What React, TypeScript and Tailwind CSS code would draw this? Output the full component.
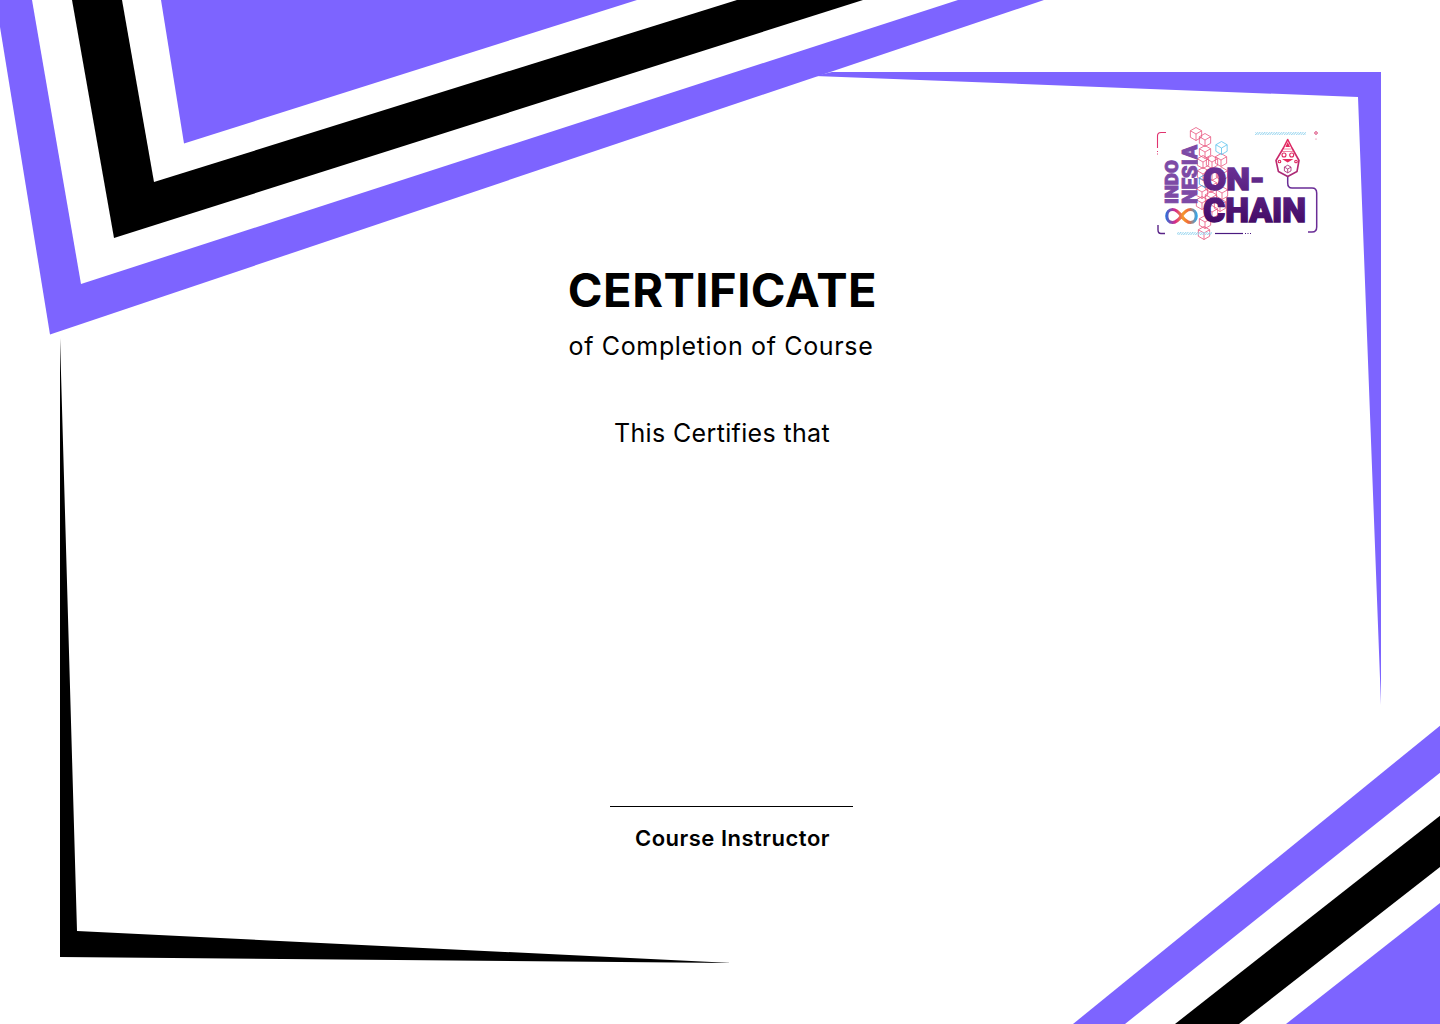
import React from 'react';

const PURPLE = '#7d64ff';

// flat-top wireframe cube used all over the logo
const Cube = ({ x, y, r = 6.5, color = '#e8557f' }: { x: number; y: number; r?: number; color?: string }) => {
  const w = r * 0.87;
  const h = r / 2;
  return (
    <g fill="none" stroke={color} strokeWidth="0.8">
      <path d={`M${x} ${y - r}L${x + w} ${y - h}V${y + h}L${x} ${y + r}L${x - w} ${y + h}V${y - h}Z`} />
      <path d={`M${x - w} ${y - h}L${x} ${y}L${x + w} ${y - h}M${x} ${y}V${y + r}`} />
    </g>
  );
};

const cubes = [
  [1196, 134], [1205, 140], [1205, 152], [1203, 162], [1212, 162], [1221, 160],
  [1212, 174], [1203, 174], [1222, 174], [1202, 192], [1222, 193], [1211, 186],
  [1202, 203], [1220, 205], [1211, 198], [1205, 222], [1204, 233], [1212, 212],
];

const Logo = () => (
  <svg width="175" height="115" viewBox="1150 125 175 115" className="block">
    <defs>
      <linearGradient id="wordFill" gradientUnits="userSpaceOnUse" x1="0" y1="165" x2="0" y2="224">
        <stop offset="0" stopColor="#6b3296" />
        <stop offset="1" stopColor="#430a66" />
      </linearGradient>
      <linearGradient id="sideFill" gradientUnits="userSpaceOnUse" x1="0" y1="145" x2="0" y2="205">
        <stop offset="0" stopColor="#7d4aa6" />
        <stop offset="1" stopColor="#4f1a78" />
      </linearGradient>
      <linearGradient id="loopFill" gradientUnits="userSpaceOnUse" x1="1166" y1="216" x2="1197" y2="216">
        <stop offset="0" stopColor="#2f6fd8" />
        <stop offset="0.3" stopColor="#d8288a" />
        <stop offset="0.55" stopColor="#f59a2a" />
        <stop offset="0.72" stopColor="#f06a3a" />
        <stop offset="1" stopColor="#2fa8ee" />
      </linearGradient>
      <linearGradient id="puppetFill" gradientUnits="userSpaceOnUse" x1="0" y1="139" x2="0" y2="180">
        <stop offset="0" stopColor="#e8285f" />
        <stop offset="1" stopColor="#a02a7a" />
      </linearGradient>
      <pattern id="hatch" width="2.4" height="3" patternUnits="userSpaceOnUse" patternTransform="skewX(-40)">
        <rect width="1.2" height="3" fill="#9fd8f0" />
      </pattern>
    </defs>

    {cubes.map(([x, y]) => (
      <Cube key={`${x}-${y}`} x={x} y={y} />
    ))}
    <Cube x={1221.5} y={148} color="#5cc3ee" />
    <Cube x={1205} y={181} color="#3ba5dc" />

    {/* brackets and rules */}
    <path d="M1166 132.5H1161Q1157.5 132.5 1157.5 136V148" fill="none" stroke="#e0336f" strokeWidth="1.1" />
    <path d="M1157.5 151V155" fill="none" stroke="#e0336f" strokeWidth="1" strokeDasharray="1 1.5" />
    <path d="M1158 225V230Q1158 233.5 1161 233.5H1165" fill="none" stroke="#5a2488" strokeWidth="1.4" />
    <path
      d="M1287.7 176V183Q1287.7 188 1292 188H1312Q1316.7 188 1316.7 193V227Q1316.7 232 1312 232H1308"
      fill="none"
      stroke="#6a2d96"
      strokeWidth="1.5"
    />
    <rect x="1255" y="132" width="51" height="3" fill="url(#hatch)" />
    <rect x="1177" y="232" width="35" height="3" fill="url(#hatch)" />
    <path d="M1215 233.5H1243" stroke="#4a1a80" strokeWidth="1.2" />
    <path d="M1245 233.5H1252" stroke="#4a1a80" strokeWidth="1.2" strokeDasharray="1 1.5" />
    <circle cx="1316" cy="133" r="1.3" fill="none" stroke="#d6336c" strokeWidth="0.9" />
    <circle cx="1316" cy="139" r="0.5" fill="#d6336c" />

    {/* puppet */}
    <path
      d="M1287.7 139.5L1292 148L1299 160.5L1297 171.5L1287.7 176.5L1278.4 171.5L1276 160.5L1283.4 148Z"
      fill="#fff"
      stroke="url(#puppetFill)"
      strokeWidth="1.6"
      strokeLinejoin="round"
    />
    <path d="M1287.7 142L1290 147H1285.4Z" fill="#e8285f" />
    <path d="M1284 149H1291.4M1282 151.5H1293.4" stroke="#ef6a8e" strokeWidth="0.8" />
    <g fill="none" stroke="#e0285f" strokeWidth="1.1">
      <circle cx="1284" cy="155" r="2" />
      <circle cx="1291.7" cy="155" r="2" />
      <circle cx="1279.5" cy="161.5" r="1.3" />
      <circle cx="1296" cy="161.5" r="1.3" />
    </g>
    <path d="M1282 159H1293.5L1287.7 162.5Z" fill="#e8285f" />
    <Cube x={1287.7} y={169} r={3.8} color="#a4206e" />

    {/* wordmark */}
    <g fontFamily="Roboto, 'Liberation Sans', sans-serif" fontWeight="900" stroke="url(#wordFill)" strokeWidth="1.4">
      <text x="1203" y="190" fontSize="32" fill="url(#wordFill)" textLength="62" lengthAdjust="spacingAndGlyphs">
        ON-
      </text>
      <text x="1203" y="222" fontSize="33" fill="url(#wordFill)" textLength="103" lengthAdjust="spacingAndGlyphs">
        CHAIN
      </text>
    </g>
    <g
      fontFamily="Roboto, 'Liberation Sans', sans-serif"
      fontWeight="900"
      fill="url(#sideFill)"
      stroke="url(#sideFill)"
      strokeWidth="0.9"
    >
      <text transform="translate(1178 204) rotate(-90)" fontSize="18" textLength="44" lengthAdjust="spacingAndGlyphs">
        INDO
      </text>
      <text transform="translate(1197 204) rotate(-90)" fontSize="20" textLength="59" lengthAdjust="spacingAndGlyphs">
        NESIA
      </text>
    </g>

    {/* infinity */}
    <path
      d="M1181.5 216C1178 211 1175.5 209.5 1172.5 209.5C1169 209.5 1166.8 212.5 1166.8 216C1166.8 219.5 1169 222.5 1172.5 222.5C1175.5 222.5 1178 221 1181.5 216C1185 211 1187.5 209.5 1190.5 209.5C1194 209.5 1196.2 212.5 1196.2 216C1196.2 219.5 1194 222.5 1190.5 222.5C1187.5 222.5 1185 221 1181.5 216Z"
      fill="none"
      stroke="url(#loopFill)"
      strokeWidth="3.2"
    />
  </svg>
);

const Decor = () => (
  <svg width="1440" height="1024" viewBox="0 0 1440 1024" className="absolute inset-0">
    {/* top left stripes */}
    <polygon points="0,0 1044,0 50,334.5 0,27" fill={PURPLE} />
    <polygon points="32,0 958,0 81,284" fill="#fff" />
    <polygon points="72,0 863,0 114,238" fill="#000" />
    <polygon points="122,0 737,0 154,182" fill="#fff" />
    <polygon points="161,0 637,0 184,143.5" fill={PURPLE} />
    {/* frame */}
    <polygon points="832,72 1381,72 1381,705 1358,97 815,76" fill={PURPLE} />
    <polygon points="60,338 77,931 732,963 60,957" fill="#000" />
    {/* bottom right stripes */}
    <polygon points="1440,725.7 1440,772.7 1125,1024 1073,1024" fill={PURPLE} />
    <polygon points="1440,815.7 1440,867 1239,1024 1175,1024" fill="#000" />
    <polygon points="1440,903 1440,1024 1286,1024" fill={PURPLE} />
  </svg>
);

export default function App() {
  return (
    <div className="relative h-[1024px] w-[1440px] overflow-hidden bg-white text-black font-['Inter','Liberation_Sans',sans-serif]">
      <Decor />

      <div className="relative flex flex-col">
        <div className="flex justify-end pt-[125px] pr-[115px]">
          <Logo />
        </div>

        <div className="flex flex-col items-center pl-[4px]">
          <h1 className="mt-[20px] ml-[1px] text-[47px] leading-[60px] font-bold tracking-[0.5px]">CERTIFICATE</h1>
          <p className="mt-[8px] mr-[2px] text-[25px] leading-[36px] tracking-[0.65px]">of Completion of Course</p>
          <p className="mt-[51px] text-[25px] leading-[36px] tracking-[0.35px]">This Certifies that</p>

          <div className="mt-[355px] ml-[19px] flex flex-col items-center">
            <div className="h-px w-[243px] bg-black" />
            <p className="mt-[15px] ml-[2px] text-[22px] leading-[32px] font-semibold tracking-[0.5px]">Course Instructor</p>
          </div>
        </div>
      </div>
    </div>
  );
}
